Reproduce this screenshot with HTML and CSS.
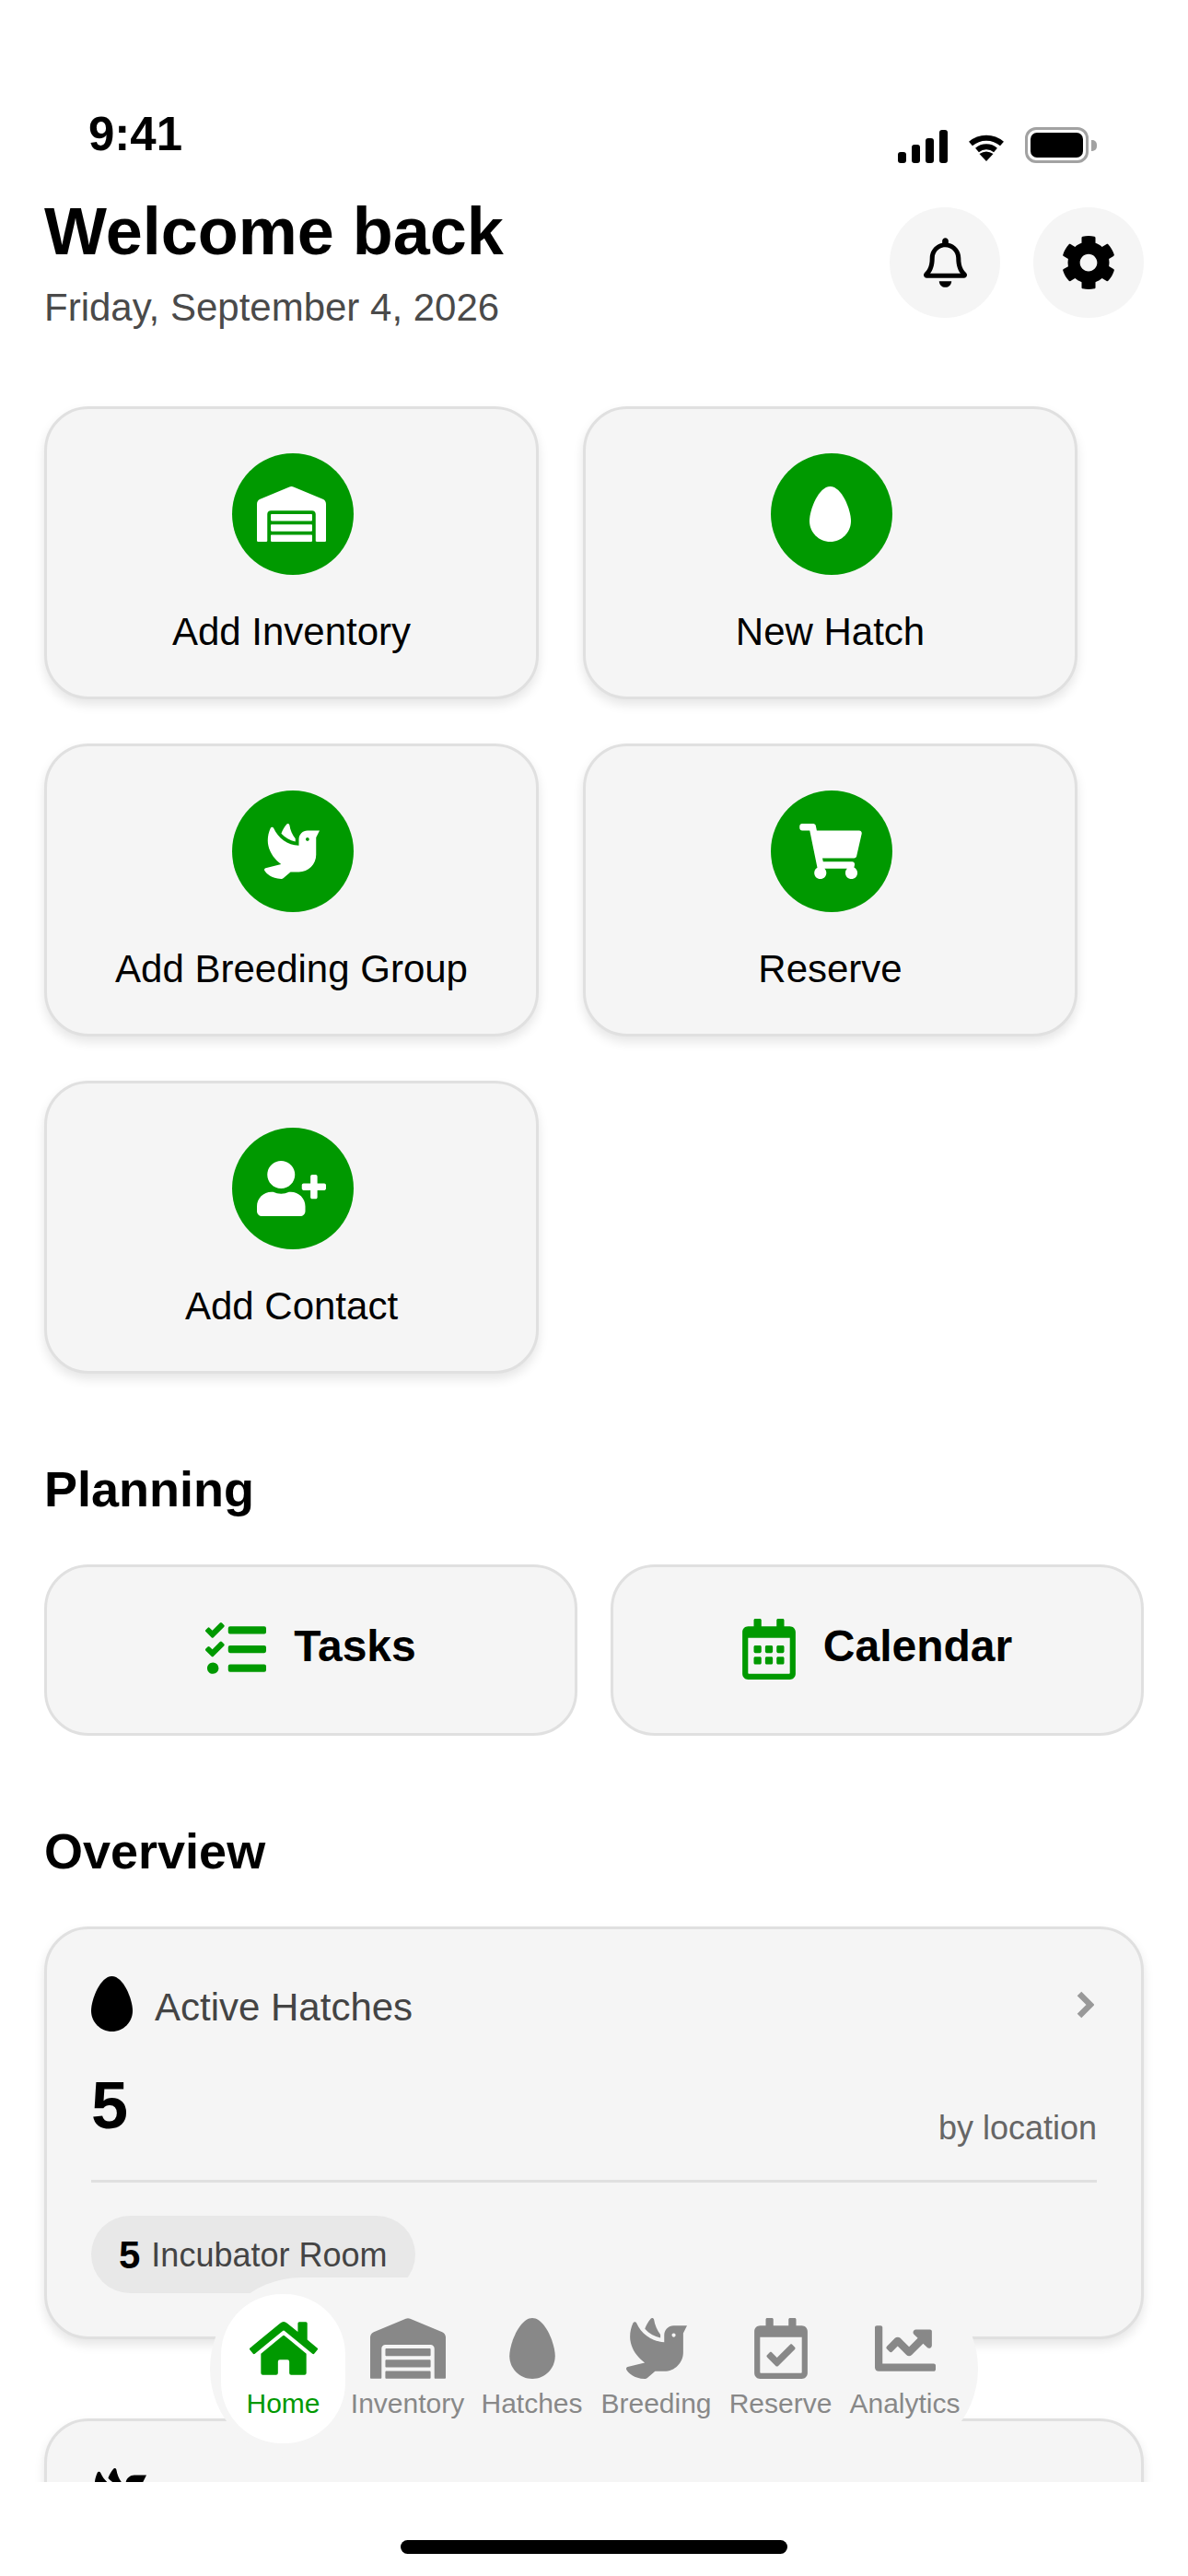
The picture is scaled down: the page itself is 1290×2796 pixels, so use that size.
FILE: index.html
```html
<!DOCTYPE html>
<html lang="en">
<head>
    <meta charset="UTF-8">
    <meta name="viewport" content="width=device-width, initial-scale=1.0">
    <title>Home</title>
    <link rel="stylesheet" href="styles.css">
</head>
<body>
    <svg class="sprite" xmlns="http://www.w3.org/2000/svg">
        <symbol id="i-home" viewBox="0 0 576 512"><path d="M280.37 148.26L96 300.11V464a16 16 0 0 0 16 16l112.06-.29a16 16 0 0 0 15.92-16V368a16 16 0 0 1 16-16h64a16 16 0 0 1 16 16v95.64a16 16 0 0 0 16 16.05L464 480a16 16 0 0 0 16-16V300L295.67 148.26a12.19 12.19 0 0 0-15.3 0zM571.6 251.47L488 182.56V44.05a12 12 0 0 0-12-12h-56a12 12 0 0 0-12 12v72.61L318.47 43a48 48 0 0 0-61 0L4.34 251.47a12 12 0 0 0-1.6 16.9l25.5 31A12 12 0 0 0 45.15 301l235.22-193.74a12.19 12.19 0 0 1 15.3 0L530.9 301a12 12 0 0 0 16.9-1.6l25.5-31a12 12 0 0 0-1.7-16.93z"/></symbol>
        <symbol id="i-warehouse" viewBox="0 0 640 512"><path d="M504 352H136.4c-4.4 0-8 3.6-8 8l-.1 48c0 4.4 3.6 8 8 8H504c4.4 0 8-3.6 8-8v-48c0-4.4-3.6-8-8-8zm0 96H136.1c-4.4 0-8 3.6-8 8l-.1 48c0 4.4 3.6 8 8 8h368c4.4 0 8-3.6 8-8v-48c0-4.4-3.6-8-8-8zm0-192H136.6c-4.4 0-8 3.6-8 8l-.1 48c0 4.4 3.6 8 8 8H504c4.4 0 8-3.6 8-8v-48c0-4.4-3.6-8-8-8zm106.5-139L338.4 3.7a48.15 48.15 0 0 0-36.9 0L29.5 117C11.7 124.5 0 141.9 0 161.3V504c0 4.4 3.6 8 8 8h80c4.4 0 8-3.6 8-8V256c0-17.6 14.6-32 32.6-32h382.8c18 0 32.6 14.4 32.6 32v248c0 4.4 3.6 8 8 8h80c4.4 0 8-3.6 8-8V161.3c0-19.4-11.7-36.8-29.5-44.3z"/></symbol>
        <symbol id="i-egg" viewBox="0 0 384 512"><path d="M192 0C86 0 0 214 0 320s86 192 192 192 192-86 192-192S298 0 192 0z"/></symbol>
        <symbol id="i-dove" viewBox="0 0 512 512"><path d="M288 167.2v-28.1c-28.2-36.3-47.1-79.3-54.1-125.2-2.1-13.5-19-18.8-27.8-8.3-21.1 24.9-37.7 54.1-48.9 86.5 34.2 38.3 80 64.6 130.8 75.1zM400 64c-44.2 0-80 35.9-80 80.1v59.4C215.6 197.3 127 133 87 41.8c-5.5-12.5-23.2-13.2-29-.9C41.4 76 32 115.2 32 156.6c0 70.8 34.1 136.9 85.1 185.9 13.2 12.7 26.1 23.2 38.9 32.8l-143.9 36C1.4 414-3.4 426.4 2.6 435.7 20 462.6 63 508.2 155.8 512c8 .3 16-2.6 22.1-7.9l65.2-56.1H320c88.4 0 160-71.5 160-159.9V128l32-64H400zm0 96.1c-8.8 0-16-7.2-16-16s7.2-16 16-16 16 7.2 16 16-7.2 16-16 16z"/></symbol>
        <symbol id="i-cart" viewBox="0 0 576 512"><path d="M528.12 301.319l47.273-208C578.806 78.301 567.391 64 551.99 64H159.208l-9.166-44.81C147.758 8.021 137.93 0 126.529 0H24C10.745 0 0 10.745 0 24v16c0 13.255 10.745 24 24 24h69.883l70.248 343.435C147.325 417.1 136 435.222 136 456c0 30.928 25.072 56 56 56s56-25.072 56-56c0-15.674-6.447-29.835-16.824-40h209.647C430.447 426.165 424 440.326 424 456c0 30.928 25.072 56 56 56s56-25.072 56-56c0-22.172-12.888-41.332-31.579-50.405l5.517-24.276c3.413-15.018-8.002-29.319-23.403-29.319H218.117l-6.545-32h293.145c11.206 0 20.92-7.754 23.403-18.681z"/></symbol>
        <symbol id="i-user-plus" viewBox="0 0 640 512"><path d="M624 208h-64v-64c0-8.8-7.2-16-16-16h-32c-8.8 0-16 7.2-16 16v64h-64c-8.8 0-16 7.2-16 16v32c0 8.8 7.2 16 16 16h64v64c0 8.8 7.2 16 16 16h32c8.8 0 16-7.2 16-16v-64h64c8.8 0 16-7.2 16-16v-32c0-8.8-7.2-16-16-16zm-400 48c70.7 0 128-57.3 128-128S294.7 0 224 0 96 57.3 96 128s57.3 128 128 128zm89.6 32h-16.7c-22.2 10.2-46.9 16-72.9 16s-50.6-5.8-72.9-16h-16.7C60.2 288 0 348.2 0 422.4V464c0 26.5 21.5 48 48 48h352c26.5 0 48-21.5 48-48v-41.6c0-74.2-60.2-134.4-134.4-134.4z"/></symbol>
        <symbol id="i-tasks" viewBox="0 0 512 512"><path d="M139.61 35.5a12 12 0 0 0-17 0L58.93 98.81l-22.7-22.12a12 12 0 0 0-17 0L3.53 92.41a12 12 0 0 0 0 17l47.59 47.4a12.78 12.78 0 0 0 17.61 0l15.59-15.62L156.52 69a12.09 12.09 0 0 0 .09-17zm0 159.19a12 12 0 0 0-17 0l-63.68 63.72-22.7-22.1a12 12 0 0 0-17 0L3.53 252a12 12 0 0 0 0 17L51 316.5a12.77 12.77 0 0 0 17.6 0l15.7-15.69 72.2-72.22a12 12 0 0 0 .09-16.9zM64 368c-26.49 0-48.59 21.5-48.59 48S37.53 464 64 464a48 48 0 0 0 0-96zm432 16H208a16 16 0 0 0-16 16v32a16 16 0 0 0 16 16h288a16 16 0 0 0 16-16v-32a16 16 0 0 0-16-16zm0-320H208a16 16 0 0 0-16 16v32a16 16 0 0 0 16 16h288a16 16 0 0 0 16-16V80a16 16 0 0 0-16-16zm0 160H208a16 16 0 0 0-16 16v32a16 16 0 0 0 16 16h288a16 16 0 0 0 16-16v-32a16 16 0 0 0-16-16z"/></symbol>
        <symbol id="i-calendar" viewBox="0 0 448 512"><path d="M148 288h-40c-6.6 0-12-5.4-12-12v-40c0-6.6 5.4-12 12-12h40c6.6 0 12 5.4 12 12v40c0 6.6-5.4 12-12 12zm108-12v-40c0-6.6-5.4-12-12-12h-40c-6.6 0-12 5.4-12 12v40c0 6.6 5.4 12 12 12h40c6.6 0 12-5.4 12-12zm96 0v-40c0-6.6-5.4-12-12-12h-40c-6.6 0-12 5.4-12 12v40c0 6.6 5.4 12 12 12h40c6.6 0 12-5.4 12-12zm-96 96v-40c0-6.6-5.4-12-12-12h-40c-6.6 0-12 5.4-12 12v40c0 6.6 5.4 12 12 12h40c6.6 0 12-5.4 12-12zm-96 0v-40c0-6.6-5.4-12-12-12h-40c-6.6 0-12 5.4-12 12v40c0 6.6 5.4 12 12 12h40c6.6 0 12-5.4 12-12zm192 0v-40c0-6.6-5.4-12-12-12h-40c-6.6 0-12 5.4-12 12v40c0 6.6 5.4 12 12 12h40c6.6 0 12-5.4 12-12zm96-260v352c0 26.5-21.5 48-48 48H48c-26.5 0-48-21.5-48-48V112c0-26.5 21.5-48 48-48h48V12c0-6.6 5.4-12 12-12h40c6.6 0 12 5.4 12 12v52h128V12c0-6.6 5.4-12 12-12h40c6.6 0 12 5.4 12 12v52h48c26.5 0 48 21.5 48 48zm-48 346V160H48v298c0 3.3 2.7 6 6 6h340c3.3 0 6-2.7 6-6z"/></symbol>
        <symbol id="i-calendar-check" viewBox="0 0 448 512"><path d="M400 64h-48V12c0-6.627-5.373-12-12-12h-40c-6.627 0-12 5.373-12 12v52H160V12c0-6.627-5.373-12-12-12h-40c-6.627 0-12 5.373-12 12v52H48C21.49 64 0 85.49 0 112v352c0 26.51 21.49 48 48 48h352c26.51 0 48-21.49 48-48V112c0-26.51-21.49-48-48-48zm-6 400H54a6 6 0 0 1-6-6V160h352v298a6 6 0 0 1-6 6zm-52.849-200.65L198.842 404.519c-4.705 4.667-12.303 4.637-16.971-.068l-75.091-75.699c-4.667-4.705-4.637-12.303.068-16.971l22.719-22.536c4.705-4.667 12.303-4.637 16.97.069l44.104 44.461 111.072-110.181c4.705-4.667 12.303-4.637 16.971.068l22.536 22.718c4.667 4.705 4.636 12.303-.069 16.97z"/></symbol>
        <symbol id="i-chart" viewBox="0 0 512 512"><path d="M496 384H64V80c0-8.84-7.16-16-16-16H16C7.16 64 0 71.16 0 80v336c0 17.67 14.33 32 32 32h464c8.84 0 16-7.16 16-16v-32c0-8.84-7.16-16-16-16zM464 96H345.94c-21.38 0-32.09 25.85-16.97 40.97l32.4 32.4L288 242.75l-73.37-73.37c-12.5-12.5-32.76-12.5-45.25 0l-68.69 68.69c-6.25 6.25-6.25 16.38 0 22.63l22.62 22.62c6.25 6.25 16.38 6.25 22.63 0L192 237.25l73.37 73.37c12.5 12.5 32.76 12.5 45.25 0l96-96 32.4 32.4c15.12 15.12 40.97 4.41 40.97-16.97V112c0-8.84-7.16-16-16-16z"/></symbol>
        <symbol id="i-bell" viewBox="0 0 448 512"><path d="M439.39 362.29c-19.32-20.76-55.47-51.99-55.47-154.29 0-77.7-54.48-139.9-127.94-155.16V32c0-17.67-14.32-32-31.98-32s-31.98 14.33-31.98 32v20.84C118.56 68.1 64.08 130.3 64.08 208c0 102.3-36.15 133.53-55.47 154.29-6 6.45-8.66 14.16-8.61 21.71.11 16.4 12.98 32 32.1 32h383.8c19.12 0 32-15.6 32.1-32 .05-7.55-2.61-15.27-8.61-21.71zM67.53 368c21.22-27.97 44.42-74.33 44.53-159.42 0-.2-.06-.38-.06-.58 0-61.86 50.14-112 112-112s112 50.14 112 112c0 .2-.06.38-.06.58.11 85.1 23.31 131.46 44.53 159.42H67.53zM224 512c35.32 0 63.97-28.65 63.97-64H160.03c0 35.35 28.65 64 63.97 64z"/></symbol>
        <symbol id="i-cog" viewBox="0 0 512 512"><path d="M487.4 315.7l-42.6-24.6c4.3-23.2 4.3-47 0-70.2l42.6-24.6c4.9-2.8 7.1-8.6 5.5-14-11.1-35.6-30-67.8-54.7-94.6-3.8-4.1-10-5.1-14.8-2.3L380.8 110c-17.9-15.4-38.5-27.3-60.8-35.1V25.8c0-5.6-3.9-10.5-9.4-11.7-36.7-8.2-74.3-7.8-109.2 0-5.5 1.2-9.4 6.1-9.4 11.7V75c-22.2 7.9-42.8 19.8-60.8 35.1L88.7 85.5c-4.9-2.8-11-1.9-14.8 2.3-24.7 26.7-43.6 58.9-54.7 94.6-1.7 5.4.6 11.2 5.5 14L67.3 221c-4.3 23.2-4.3 47 0 70.2l-42.6 24.6c-4.9 2.8-7.1 8.6-5.5 14 11.1 35.6 30 67.8 54.7 94.6 3.8 4.1 10 5.1 14.8 2.3l42.6-24.6c17.9 15.4 38.5 27.3 60.8 35.1v49.2c0 5.6 3.9 10.5 9.4 11.7 36.7 8.2 74.3 7.8 109.2 0 5.5-1.2 9.4-6.1 9.4-11.7v-49.2c22.2-7.9 42.8-19.8 60.8-35.1l42.6 24.6c4.9 2.8 11 1.9 14.8-2.3 24.7-26.7 43.6-58.9 54.7-94.6 1.5-5.5-.7-11.3-5.6-14.1zM256 336c-44.1 0-80-35.9-80-80s35.9-80 80-80 80 35.9 80 80-35.9 80-80 80z"/></symbol>
    </svg>

    <div class="phone">
        <div class="viewport">
            <div class="statusbar">
                <span class="time">9:41</span>
                <div class="status-icons">
                    <div class="signal">
                        <span class="bar bar-1"></span>
                        <span class="bar bar-2"></span>
                        <span class="bar bar-3"></span>
                        <span class="bar bar-4"></span>
                    </div>
                    <svg class="wifi" viewBox="0 0 40 30">
                        <path d="M3 11A26 26 0 0 1 37 11" fill="none" stroke="#000" stroke-width="6"/>
                        <path d="M10 18A15.5 15.5 0 0 1 30 18" fill="none" stroke="#000" stroke-width="6"/>
                        <path d="M20 30L12.5 22Q20 17 27.5 22Z"/>
                    </svg>
                    <div class="battery">
                        <div class="battery-body"><span class="battery-fill"></span></div>
                        <span class="battery-cap"></span>
                    </div>
                </div>
            </div>

            <header class="header">
                <div>
                    <h1>Welcome back</h1>
                    <p class="date">Friday, September 4, 2026</p>
                </div>
                <div class="header-actions">
                    <button class="round-btn"><svg class="bell"><use href="#i-bell"/></svg></button>
                    <button class="round-btn"><svg class="cog"><use href="#i-cog"/></svg></button>
                </div>
            </header>

            <section class="quick-grid">
                <div class="quick-card">
                    <span class="quick-icon"><svg class="ic-warehouse"><use href="#i-warehouse"/></svg></span>
                    <span class="quick-label">Add Inventory</span>
                </div>
                <div class="quick-card">
                    <span class="quick-icon"><svg class="ic-egg"><use href="#i-egg"/></svg></span>
                    <span class="quick-label">New Hatch</span>
                </div>
                <div class="quick-card">
                    <span class="quick-icon"><svg class="ic-dove"><use href="#i-dove"/></svg></span>
                    <span class="quick-label">Add Breeding Group</span>
                </div>
                <div class="quick-card">
                    <span class="quick-icon"><svg class="ic-cart"><use href="#i-cart"/></svg></span>
                    <span class="quick-label">Reserve</span>
                </div>
                <div class="quick-card">
                    <span class="quick-icon"><svg class="ic-user"><use href="#i-user-plus"/></svg></span>
                    <span class="quick-label">Add Contact</span>
                </div>
            </section>

            <h2>Planning</h2>
            <section class="plan-row">
                <div class="plan-card">
                    <svg class="plan-tasks"><use href="#i-tasks"/></svg>
                    <span>Tasks</span>
                </div>
                <div class="plan-card">
                    <svg class="plan-calendar"><use href="#i-calendar"/></svg>
                    <span>Calendar</span>
                </div>
            </section>

            <h2>Overview</h2>
            <section class="stat-card">
                <div class="stat-head">
                    <svg class="stat-egg"><use href="#i-egg"/></svg>
                    <span class="stat-title">Active Hatches</span>
                    <svg class="chevron" viewBox="0 0 19 30"><path d="M3 3L15 15L3 27" fill="none" stroke="#999" stroke-width="6.5"/></svg>
                </div>
                <div class="stat-value">
                    <span class="stat-number">5</span>
                    <span class="stat-note">by location</span>
                </div>
                <div class="stat-divider"></div>
                <div class="pill"><b>5</b><span>Incubator Room</span></div>
            </section>

            <section class="stat-card stat-next">
                <div class="stat-head">
                    <svg class="stat-dove"><use href="#i-dove"/></svg>
                </div>
            </section>

            <nav class="tabbar">
                <div class="tab active">
                    <svg class="tab-home"><use href="#i-home"/></svg>
                    <span>Home</span>
                </div>
                <div class="tab">
                    <svg class="tab-warehouse"><use href="#i-warehouse"/></svg>
                    <span>Inventory</span>
                </div>
                <div class="tab">
                    <svg class="tab-egg"><use href="#i-egg"/></svg>
                    <span>Hatches</span>
                </div>
                <div class="tab">
                    <svg class="tab-dove"><use href="#i-dove"/></svg>
                    <span>Breeding</span>
                </div>
                <div class="tab">
                    <svg class="tab-calendar"><use href="#i-calendar-check"/></svg>
                    <span>Reserve</span>
                </div>
                <div class="tab">
                    <svg class="tab-chart"><use href="#i-chart"/></svg>
                    <span>Analytics</span>
                </div>
            </nav>
        </div>

        <div class="home-area"><span class="home-bar"></span></div>
    </div>
</body>
</html>
```

FILE: styles.css
```css
* {
    box-sizing: border-box;
}

body {
    margin: 0;
    background-color: #fff;
    color: #000;
    font-family: "Liberation Sans", Arial, sans-serif;
}

.sprite {
    display: none;
}

svg {
    display: block;
    fill: currentColor;
}

.phone {
    width: 1290px;
    height: 2796px;
    display: flex;
    flex-direction: column;
    overflow: hidden;
}

.viewport {
    position: relative;
    height: 2694px;
    overflow: hidden;
}

/* status bar */
.statusbar {
    height: 209px;
    display: flex;
    justify-content: space-between;
    align-items: flex-start;
    padding: 116px 99px 0 96px;
}

.time {
    font-size: 51px;
    font-weight: bold;
    line-height: 59px;
}

.status-icons {
    display: flex;
    align-items: flex-end;
    gap: 22px;
    margin-top: 22px;
}

.signal {
    display: flex;
    align-items: flex-end;
    gap: 5.5px;
    height: 36px;
}

.bar {
    width: 9.5px;
    background-color: #000;
    border-radius: 3px;
}

.bar-1 { height: 12px; }
.bar-2 { height: 20px; }
.bar-3 { height: 27px; }
.bar-4 { height: 36px; }

.wifi {
    width: 40px;
    height: 30px;
    margin-bottom: 2px;
}

.battery {
    display: flex;
    align-items: center;
    gap: 3px;
}

.battery-body {
    width: 69px;
    height: 39px;
    border: 3px solid #a2a2a2;
    border-radius: 12px;
    padding: 3px;
}

.battery-fill {
    display: block;
    height: 100%;
    background-color: #000;
    border-radius: 7px;
}

.battery-cap {
    width: 6px;
    height: 12px;
    background-color: #a2a2a2;
    border-radius: 0 5px 5px 0;
}

/* header */
.header {
    display: flex;
    justify-content: space-between;
    align-items: flex-start;
    height: 147px;
    margin: 0 48px 85px;
}

h1 {
    margin: 1px 0 0;
    font-size: 72px;
    line-height: 83px;
}

.date {
    margin: 17px 0 0;
    font-size: 42px;
    line-height: 48px;
    color: #4a4a4a;
}

.header-actions {
    display: flex;
    gap: 36px;
    margin-top: 16px;
}

.round-btn {
    width: 120px;
    height: 120px;
    padding: 0;
    border: none;
    border-radius: 50%;
    background-color: #f5f5f5;
    color: #000;
    display: flex;
    justify-content: center;
    align-items: center;
}

.bell {
    width: 47px;
    height: 54px;
}

.cog {
    width: 60px;
    height: 60px;
}

/* quick actions */
.quick-grid {
    display: grid;
    grid-template-columns: 537px 537px;
    column-gap: 48px;
    row-gap: 48px;
    margin: 0 48px;
}

.quick-card {
    height: 318px;
    padding: 48px 0 40px;
    display: flex;
    flex-direction: column;
    align-items: center;
    gap: 38px;
    background-color: #f5f5f5;
    border: 3px solid #e0e0e0;
    border-radius: 48px;
    box-shadow: 0 6px 12px rgba(0, 0, 0, 0.1);
}

.quick-icon {
    flex-shrink: 0;
    width: 132px;
    height: 132px;
    margin-left: 3px;
    padding-right: 3px;
    border-radius: 50%;
    background-color: #009900;
    color: #fff;
    display: flex;
    justify-content: center;
    align-items: center;
}

.quick-label {
    font-size: 42px;
    line-height: 48px;
}

.ic-warehouse { width: 75px; height: 60px; }
.ic-egg { width: 45px; height: 60px; }
.ic-dove { width: 60px; height: 60px; }
.ic-cart { width: 68px; height: 60px; }
.ic-user { width: 75px; height: 60px; }

/* sections */
h2 {
    margin: 94px 48px 51px;
    font-size: 54px;
    line-height: 62px;
}

.plan-row {
    display: flex;
    gap: 36px;
    margin: 0 48px 1px;
}

.plan-card {
    flex: 1;
    height: 186px;
    padding-bottom: 2px;
    display: flex;
    justify-content: center;
    align-items: center;
    gap: 30px;
    font-size: 48px;
    font-weight: bold;
    background-color: #f5f5f5;
    border: 3px solid #e0e0e0;
    border-radius: 48px;
}

.plan-card span {
    margin-bottom: 8px;
}

.plan-card svg {
    color: #009900;
    height: 66px;
}

.plan-tasks { width: 66px; }
.plan-calendar { width: 58px; }

/* overview cards */
.stat-card {
    margin: 0 48px;
    padding: 48px;
    height: 448px;
    background-color: #f5f5f5;
    border: 3px solid #e0e0e0;
    border-radius: 48px;
    box-shadow: 0 6px 12px rgba(0, 0, 0, 0.1);
}

.stat-next {
    margin-top: 86px;
}

.stat-head {
    display: flex;
    align-items: center;
    gap: 24px;
    height: 66px;
}

.stat-egg {
    width: 45px;
    height: 60px;
}

.stat-dove {
    width: 60px;
    height: 60px;
}

.stat-title {
    flex: 1;
    margin-top: 8px;
    font-size: 42px;
    color: #444;
}

.chevron {
    width: 19px;
    height: 30px;
    margin: 2px 3px 0 0;
}

.stat-value {
    display: flex;
    justify-content: space-between;
    align-items: flex-end;
    margin-top: 36px;
}

.stat-number {
    font-size: 72px;
    font-weight: bold;
    line-height: 82px;
}

.stat-note {
    font-size: 36px;
    line-height: 42px;
    margin-bottom: -5px;
    color: #666;
}

.stat-divider {
    height: 3px;
    margin-top: 40px;
    background-color: #e0e0e0;
}

.pill {
    display: inline-flex;
    align-items: center;
    gap: 12px;
    height: 84px;
    margin-top: 36px;
    padding: 2px 30px 0;
    border-radius: 42px;
    background-color: #e8e8e8;
    font-size: 36px;
    color: #444;
}

.pill b {
    font-size: 42px;
    color: #000;
}

/* floating tab bar */
.tabbar {
    position: absolute;
    left: 228px;
    bottom: 24px;
    display: flex;
    padding: 18px 12px;
    background-color: #f5f5f5;
    border-radius: 99px;
}

.tab {
    width: 135px;
    height: 162px;
    display: flex;
    flex-direction: column;
    justify-content: center;
    align-items: center;
    gap: 10px;
    border-radius: 66px;
    color: #888;
    font-size: 30px;
    line-height: 34px;
    white-space: nowrap;
}

.tab.active {
    background-color: #fff;
    color: #009900;
}

.tab svg {
    height: 66px;
}

.tab-home { width: 74px; }
.tab-warehouse { width: 82px; }
.tab-egg { width: 50px; }
.tab-dove { width: 66px; }
.tab-calendar { width: 58px; }
.tab-chart { width: 66px; }

/* home indicator */
.home-area {
    flex: 1;
    display: flex;
    justify-content: center;
    padding-top: 63px;
}

.home-bar {
    width: 420px;
    height: 15px;
    border-radius: 8px;
    background-color: #000;
}
```
